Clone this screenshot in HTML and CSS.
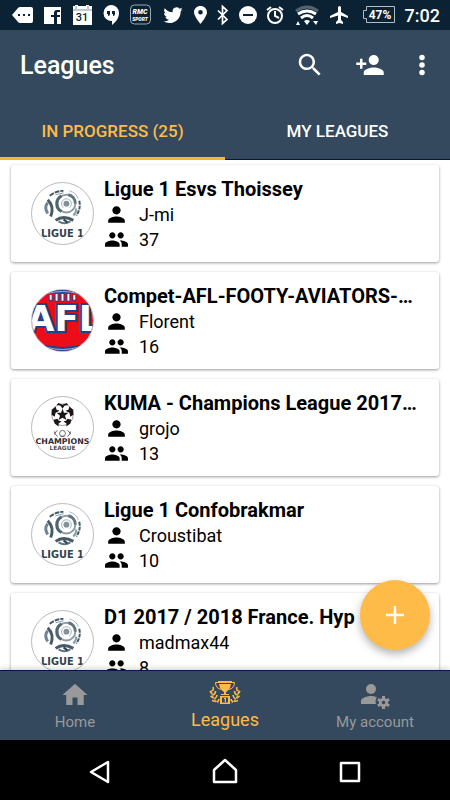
FILE: index.html
```html
<!DOCTYPE html>
<html lang="en">
<head>
  <meta charset="UTF-8" />
  <meta name="viewport" content="width=device-width, initial-scale=1.0"/>
  <title>Leagues</title>
  <link rel="stylesheet" href="styles.css">
</head>
<body>
  <!-- shared icons -->
  <svg class="defs" width="0" height="0" aria-hidden="true">
    <symbol id="person" viewBox="0 0 24 24">
      <path d="M12 12c2.21 0 4-1.79 4-4s-1.79-4-4-4-4 1.79-4 4 1.79 4 4 4zm0 2c-2.67 0-8 1.34-8 4v2h16v-2c0-2.66-5.33-4-8-4z"/>
    </symbol>
    <symbol id="group" viewBox="0 0 24 24">
      <path d="M16 11c1.66 0 2.99-1.34 2.99-3S17.66 5 16 5s-3 1.34-3 3 1.34 3 3 3zm-8 0c1.66 0 2.99-1.34 2.99-3S9.66 5 8 5 5 6.34 5 8s1.34 3 3 3zm0 2c-2.33 0-7 1.17-7 3.5V19h14v-2.5C15 14.17 10.33 13 8 13zm8 0c-.29 0-.62.02-.97.05 1.16.84 1.97 1.97 1.97 3.45V19h6v-2.5c0-2.33-4.67-3.5-7-3.5z"/>
    </symbol>
    <symbol id="ligue1" viewBox="0 0 62 62">
      <g fill="none">
        <circle cx="35" cy="21" r="9" stroke="#8b9ca6" stroke-width="2"/>
        <path d="M30 29a9 9 0 0 1 0-16" stroke="#50656f" stroke-width="3"/>
        <path d="M37 12a9 9 0 0 1 7 9" stroke="#62757f" stroke-width="3"/>
        <path d="M32 25a5 5 0 1 1 6 0" stroke="#a3b1b9" stroke-width="1"/>
        <path d="M38 8q7 2 9 8" stroke="#a9b5bc" stroke-width="1"/>
        <path d="M16 17q7 7 3 17" stroke="#465b68" stroke-width="3"/>
        <path d="M16 20q-4 5 0 11" stroke="#71838d" stroke-width="3"/>
        <path d="M48 18q2 8-3 15" stroke="#465b68" stroke-width="2" stroke-dasharray="4 1"/>
        <path d="M45 26q0 4-3 7" stroke="#8c9ca5" stroke-width="2"/>
        <path d="M18 13q6-5 14-5" stroke="#465b68" stroke-width="2" stroke-dasharray="5 1"/>
        <path d="M24 12l8-2" stroke="#8999a2" stroke-width="1"/>
        <path d="M24 38q8-6 18 0" stroke="#465b68" stroke-width="3"/>
        <path d="M27 39q6 4 12 0" stroke="#61747f" stroke-width="2"/>
        <path d="M32 37l4 3" stroke="#2f434f" stroke-width="2"/>
      </g>
      <circle cx="35" cy="21" r="3" fill="#80929d"/>
    </symbol>
  </svg>

  <div class="status-bar">
    <svg width="22" height="22" viewBox="0 0 22 22"><path fill="#fff" d="M0 11l6-7q1-1 2-1h11q2 0 2 2v12q0 2-2 2H8q-1 0-2-1z"/><path fill="#0a2233" d="M6 10h2v2H6zM11 10h2v2h-2zM16 10h2v2h-2z"/></svg>
    <svg width="19" height="22" viewBox="0 0 19 22"><path fill="#fff" d="M0 3h17v17h-4v-7h3v-2h-3V9q0-1 1-1h2V6h-3q-3 0-3 3v2H7v2h3v7H0z"/></svg>
    <svg width="21" height="22" viewBox="0 0 21 22"><path fill="#fff" d="M0 2h2v-1h3v1h8v-1h3v1h3v19H0z"/><path d="M3 2v3M15 2v3M0 6h19" stroke="#8391a0"/><text class="cal-day" x="9" y="17">31</text></svg>
    <svg width="17" height="22" viewBox="0 0 17 22"><path fill="#fff" d="M8 1a8 8 0 0 1 8 8c0 5-3 9-7 12v-4A8 8 0 0 1 8 1z"/><path fill="#0a2233" d="M4 7h3v3q0 2-2 2v-2H4zM9 7h3v3q0 2-2 2v-2H9z"/></svg>
    <svg width="22" height="22" viewBox="0 0 22 22"><rect x=".5" y="1" width="20" height="19" rx="4" fill="none" stroke="#9da9b2"/><text class="rmc" x="10" y="10" font-size="7">RMC</text><text class="rmc" x="10" y="17" font-size="5">SPORT</text></svg>
    <svg width="22" height="22" viewBox="0 0 24 24"><path fill="#fff" d="M22.5 5.7c-.8.3-1.6.6-2.5.7.9-.5 1.600-1.400 1.900-2.400-.8.5-1.800.9-2.800 1.100a4.300 4.300 0 0 0-7.400 3.900C8.200 8.800 5 7.100 2.900 4.500c-1.100 1.900-.6 4.400 1.300 5.700-.7 0-1.400-.2-2-.5 0 2.100 1.500 3.900 3.500 4.300-.6.200-1.300.2-2 .1.600 1.700 2.200 3 4.100 3A8.700 8.700 0 0 1 1.500 18.900c8 4.600 18.900.2 18.900-11.100.8-.6 1.500-1.300 2.100-2.100z"/></svg>
    <svg width="13" height="22" viewBox="0 0 13 22"><path fill="#fff" fill-rule="evenodd" d="M6.500 2C3 2 0 4.700 0 8.300 0 12.500 6.500 20 6.500 20S13 12.500 13 8.300C13 4.700 10 2 6.500 2zm0 4a2.300 2.300 0 1 1 0 4.600 2.300 2.300 0 0 1 0-4.600z"/></svg>
    <svg width="12" height="22" viewBox="0 0 12 22"><path fill="none" stroke="#fff" stroke-width="1.700" d="M1 6.500l9 9-4.500 4V2.500l4.500 4-9 9"/></svg>
    <svg width="18" height="22" viewBox="0 0 18 22"><circle cx="9" cy="11" r="9" fill="#fff"/><path fill="#0a2233" d="M4 10h10v2H4z"/></svg>
    <svg width="19" height="22" viewBox="0 0 19 22"><g fill="none" stroke="#fff" stroke-width="2"><circle cx="9" cy="12" r="7"/><path d="M9 7v5l4 2"/><path d="M1 6l4-3M17 6l-4-3"/></g></svg>
    <svg width="24" height="22" viewBox="0 0 24 22"><g fill="none" stroke-width="3"><path stroke="#526471" d="M1 7q11-8 22 0"/><path stroke="#fff" d="M3 10q9-6 18 0"/><path stroke="#fff" d="M6 14q6-5 12 0"/></g><path fill="#fff" d="M9 17q3-2 6 0l-3 4zM1 21l2-4 2 4zM18 17h5l-2 4z"/></svg>
    <svg width="23" height="22" viewBox="0 0 23 22"><path fill="#fff" d="M19 14v-2l-7-4V3.500a1.500 1.500 0 0 0-3 0V8l-8 4v2l8-2.500V16l-2 2v2l3.500-1 3.500 1v-2l-2-2v-4.500z"/></svg>
    <svg width="33" height="22" viewBox="0 0 33 22"><path fill="none" stroke="#b4bdc4" d="M4.500 2.500h28v16h-28v-4h-3v-8h3z"/><text class="battery" x="18" y="15">47%</text></svg>
    <time class="clock">7:02</time>
  </div>

  <header>
    <div class="app-bar">
      <h1>Leagues</h1>
      <div class="actions">
        <button aria-label="Search">
          <svg width="30" height="30" viewBox="0 0 24 24"><path d="M15.500 14h-.790l-.280-.270C15.410 12.590 16 11.110 16 9.500 16 5.910 13.090 3 9.500 3S3 5.910 3 9.500 5.910 16 9.500 16c1.610 0 3.090-.590 4.230-1.570l.270.280v.790l5 4.990L20.490 19l-4.990-5zm-6 0C7.010 14 5 11.990 5 9.500S7.010 5 9.500 5 14 7.010 14 9.500 11.990 14 9.500 14z"/></svg>
        </button>
        <button aria-label="Add player">
          <svg width="30" height="30" viewBox="0 0 24 24"><path d="M15 12c2.210 0 4-1.790 4-4s-1.790-4-4-4-4 1.790-4 4 1.790 4 4 4zm-9-2V7H4v3H1v2h3v3h2v-3h3v-2H6zm9 4c-2.670 0-8 1.340-8 4v2h16v-2c0-2.660-5.330-4-8-4z"/></svg>
        </button>
        <button class="more" aria-label="More options">
          <svg width="30" height="30" viewBox="0 0 24 24"><circle cx="12" cy="6" r="2.200"/><circle cx="12" cy="12" r="2.200"/><circle cx="12" cy="18" r="2.200"/></svg>
        </button>
      </div>
    </div>
    <nav class="tabs">
      <a class="active" href="#progress">IN PROGRESS (25)</a>
      <a href="#mine">MY LEAGUES</a>
    </nav>
  </header>

  <main>
    <div class="league-list">
      <article class="card">
        <div class="avatar"><svg viewBox="0 0 62 62"><use href="#ligue1"/><text class="logo-text" x="31" y="55" font-size="10" fill="#30434f">LIGUE 1</text></svg></div>
        <div class="info">
          <h2>Ligue 1 Esvs Thoissey</h2>
          <p><svg class="icon"><use href="#person"/></svg>J-mi</p>
          <p><svg class="icon"><use href="#group"/></svg>37</p>
        </div>
      </article>

      <article class="card">
        <div class="avatar">
          <svg viewBox="0 0 62 62">
            <rect width="62" height="62" fill="#ed0d19"/>
            <path fill="#174690" d="M8 0h46v6q-23-6-46 0z"/>
            <path fill="none" stroke="#a9bbd9" d="M14 4q17-5 34 0"/>
            <path fill="none" stroke="#174690" stroke-width="4" d="M19 5v6M25 4v8M31 4v8M37 4v8M43 5v6"/>
            <path fill="none" stroke="#fff" stroke-width="2" d="M19 5v5M25 4v7M31 4v7M37 4v7M43 5v5"/>
            <path fill="#174690" d="M9 55q22 6 44 0v7H9z"/>
            <path fill="none" stroke="#a9bbd9" d="M14 58q17 5 34 0"/>
            <text class="afl" x="-5" y="42">AFL</text>
          </svg>
        </div>
        <div class="info">
          <h2>Compet-AFL-FOOTY-AVIATORS-…</h2>
          <p><svg class="icon"><use href="#person"/></svg>Florent</p>
          <p><svg class="icon"><use href="#group"/></svg>16</p>
        </div>
      </article>

      <article class="card">
        <div class="avatar">
          <svg viewBox="0 0 62 62">
            <circle cx="31" cy="18" r="11" fill="#fff" stroke="#999" stroke-width="1"/>
            <g fill="#1c1518">
              <path d="M31 12l1.500 4 4.500 0-3.500 3 1.500 4.500-4-2.500-4 2.500 1.500-4.500-3.500-3 4.500 0z"/>
              <path d="M27 6l4 2 4-2 2 2-4 1-2 3-2-3-4-1zM20 13l4-3 1 3 3 1-4 2-1 4-3-2zM42 13l-4-3-1 3-3 1 4 2 1 4 3-2zM22 23l4-1 1 2 3 1-3 2v3l-4-3zM40 23l-4-1-1 2-3 1 3 2v3l4-3z"/>
            </g>
            <g fill="none" stroke="#696969"><circle cx="31" cy="37" r="3"/><path d="M26 34q-5 3 0 6M36 34q5 3 0 6M29 40h4M23 35v3M39 35v3"/></g>
            <text class="logo-text" x="31" y="48" font-size="8" fill="#332b2d">CHAMPIONS</text>
            <text class="logo-text" x="31" y="54" font-size="6" fill="#544c4e">LEAGUE</text>
          </svg>
        </div>
        <div class="info">
          <h2>KUMA - Champions League 2017…</h2>
          <p><svg class="icon"><use href="#person"/></svg>grojo</p>
          <p><svg class="icon"><use href="#group"/></svg>13</p>
        </div>
      </article>

      <article class="card">
        <div class="avatar"><svg viewBox="0 0 62 62"><use href="#ligue1"/><text class="logo-text" x="31" y="55" font-size="10" fill="#30434f">LIGUE 1</text></svg></div>
        <div class="info">
          <h2>Ligue 1 Confobrakmar</h2>
          <p><svg class="icon"><use href="#person"/></svg>Croustibat</p>
          <p><svg class="icon"><use href="#group"/></svg>10</p>
        </div>
      </article>

      <article class="card">
        <div class="avatar"><svg viewBox="0 0 62 62"><use href="#ligue1"/><text class="logo-text" x="31" y="55" font-size="10" fill="#30434f">LIGUE 1</text></svg></div>
        <div class="info">
          <h2>D1 2017 / 2018 France. Hyp</h2>
          <p><svg class="icon"><use href="#person"/></svg>madmax44</p>
          <p><svg class="icon"><use href="#group"/></svg>8</p>
        </div>
      </article>
    </div>
    <button class="fab" aria-label="Create league">
      <svg width="30" height="30" viewBox="0 0 30 30"><path d="M15 6v18M6 15h18" stroke="#fff" stroke-width="2.400"/></svg>
    </button>
  </main>

  <nav class="bottom-nav">
    <a href="#home">
      <svg width="30" height="30" viewBox="0 0 24 24"><path d="M10 20v-6h4v6h5v-8h3L12 3 2 12h3v8z"/></svg>
      <span>Home</span>
    </a>
    <a class="active" href="#leagues">
      <svg width="32" height="30" viewBox="0 0 32 30">
        <path d="M9 3h14v2H9zM10 6h12q-1 6-5 8v2h3v1h-8v-1h3v-2q-4-2-5-8z"/>
        <path fill="none" stroke="#ffbb48" d="M9 4.500H6.500q0 6 6 7M23 4.500h2.500q0 6-6 7"/>
        <path fill-rule="evenodd" d="M11 18h10v8H11zm2 1.500v5h6v-5zm2 .500h2v4h-1.200v-3H15z"/>
        <g fill="none" stroke="#ffbb48">
          <path stroke-width=".8" d="M2.500 12q0 8 7 13M29.500 12q0 8-7 13"/>
          <path stroke-width="1.600" d="M4 9q1 2-.5 4M1 13l2 3M6.500 13q0 3-2.500 4M1.500 18l3 2M8 17q0 2-2.500 4M3 22.500l4 1M10 21q0 2-2 3M28 9q-1 2 .5 4M31 13l-2 3M25.500 13q0 3 2.500 4M30.500 18l-3 2M24 17q0 2 2.500 4M29 22.500l-4 1M22 21q0 2 2 3"/>
        </g>
      </svg>
      <span>Leagues</span>
    </a>
    <a href="#account">
      <svg width="30" height="30" viewBox="0 0 30 30">
        <circle cx="11" cy="9" r="5"/>
        <path d="M11 16c1.500 0 4 .4 6 1.200-1.500 2-1.800 4.500-1 6.800H1v-3c0-3.500 7-5 10-5z"/>
        <g transform="translate(23.500 22.500)">
          <circle r="3.200" fill="none" stroke="#999" stroke-width="2.800"/>
          <path stroke="#999" stroke-width="3" d="M0-6.500v3M0 3.500v3M-5.600-3.200l2.600 1.500M3 1.700l2.600 1.500M-5.600 3.200l2.600-1.500M3-1.700l2.600-1.500"/>
        </g>
      </svg>
      <span>My account</span>
    </a>
  </nav>

  <div class="system-nav">
    <button aria-label="Back"><svg width="30" height="30" viewBox="0 0 30 30"><path d="M23 5v20L6 15z"/></svg></button>
    <button aria-label="Home screen"><svg width="30" height="30" viewBox="0 0 30 30"><path d="M15 3l11 10v12H4V13z"/></svg></button>
    <button aria-label="Recent apps"><svg width="30" height="30" viewBox="0 0 30 30"><path d="M6 6h18v18H6z"/></svg></button>
  </div>
</body>
</html>
```
FILE: styles.css
```css
* {
  box-sizing: border-box;
}
body {
  margin: 0;
  height: 100vh;
  display: flex;
  flex-direction: column;
  font-family: Roboto, "Liberation Sans", sans-serif;
  background: #fff;
  color: #000;
  overflow: hidden;
}
svg {
  display: block;
  flex-shrink: 0;
}
.defs {
  position: absolute;
}
button {
  padding: 0;
  border: none;
  background: none;
  cursor: pointer;
}
a {
  text-decoration: none;
}
h1, h2, p {
  margin: 0;
}

/* Status bar */
.status-bar {
  flex-shrink: 0;
  height: 30px;
  padding: 0 10px 0 12px;
  display: flex;
  align-items: center;
  justify-content: space-between;
  background: #0a2233;
  color: #fff;
}
.cal-day {
  font-size: 11px;
  font-weight: 500;
  text-anchor: middle;
  fill: #0a2233;
}
.rmc {
  font-weight: 900;
  font-style: italic;
  text-anchor: middle;
  fill: #fff;
}
.battery {
  font-size: 12px;
  font-weight: 700;
  text-anchor: middle;
  fill: #fff;
}
.clock {
  font-size: 18px;
  font-weight: 500;
}

/* Header */
header {
  flex-shrink: 0;
  background: #34495e;
}
.app-bar {
  height: 70px;
  padding: 0 13px 0 20px;
  display: flex;
  align-items: center;
  justify-content: space-between;
}
h1 {
  font-size: 25px;
  font-weight: 500;
  line-height: 30px;
  padding-top: 2px;
  color: #fff;
}
.actions {
  display: flex;
  gap: 30px;
  fill: #fff;
}
.actions .more {
  margin-left: -8px;
}
.tabs {
  display: flex;
  height: 60px;
}
.tabs a {
  flex: 1;
  padding-top: 21px;
  text-align: center;
  font-size: 17px;
  font-weight: 500;
  line-height: 20px;
  color: #fff;
  border-bottom: 1px solid #041747;
}
.tabs a.active {
  color: #ffbb48;
  border-bottom: 3px solid #fdb136;
}

/* League list */
main {
  position: relative;
  flex: 1;
  min-height: 0;
}
.league-list {
  height: 100%;
  padding: 5px 11px;
  display: flex;
  flex-direction: column;
  gap: 10px;
  overflow: hidden;
}
.card {
  flex-shrink: 0;
  display: flex;
  align-items: flex-start;
  gap: 10px;
  padding: 11px 20px 10px;
  border-radius: 3px;
  background: #fff;
  box-shadow: 0 1px 3px rgba(0,0,0,0.4);
}
.avatar {
  flex-shrink: 0;
  width: 63px;
  height: 63px;
  margin-top: 6px;
  border: 1px solid #bbb;
  border-radius: 50%;
  overflow: hidden;
}
.logo-text {
  font-family: "DejaVu Sans", sans-serif;
  font-weight: 700;
  text-anchor: middle;
}
.afl {
  font-family: "DejaVu Sans", sans-serif;
  font-size: 36px;
  font-weight: 700;
  fill: #fff;
  stroke: #174690;
  stroke-width: 4px;
  paint-order: stroke;
}
.info {
  flex: 1;
  min-width: 0;
}
.info h2 {
  font-size: 20px;
  font-weight: 700;
  line-height: 26px;
  white-space: nowrap;
}
.info p {
  display: flex;
  align-items: center;
  gap: 10px;
  font-size: 18px;
  line-height: 25px;
}
.icon {
  width: 25px;
  height: 25px;
}
.fab {
  position: absolute;
  right: 20px;
  bottom: 20px;
  width: 70px;
  height: 70px;
  display: flex;
  align-items: center;
  justify-content: center;
  border-radius: 50%;
  background: #ffbb48;
  box-shadow: 0 4px 8px rgba(0,0,0,0.3);
}

/* Bottom navigation */
.bottom-nav {
  position: relative;
  flex-shrink: 0;
  height: 70px;
  display: flex;
  background: #34495e;
  border-top: 1px solid #041747;
  box-shadow: 0 -1px 6px rgba(0,0,0,0.2);
}
.bottom-nav a {
  flex: 1;
  display: flex;
  flex-direction: column;
  align-items: center;
  padding-top: 9px;
  font-size: 15px;
  line-height: 24px;
  color: #999;
  fill: #999;
}
.bottom-nav a.active {
  padding-top: 7px;
  font-size: 18px;
  color: #ffbb48;
  fill: #ffbb48;
}

/* System navigation */
.system-nav {
  flex-shrink: 0;
  height: 60px;
  display: flex;
  align-items: center;
  justify-content: center;
  gap: 95px;
  padding-top: 3px;
  background: #000;
}
.system-nav path {
  fill: none;
  stroke: #fff;
  stroke-width: 2.5px;
  stroke-linejoin: round;
}
```
